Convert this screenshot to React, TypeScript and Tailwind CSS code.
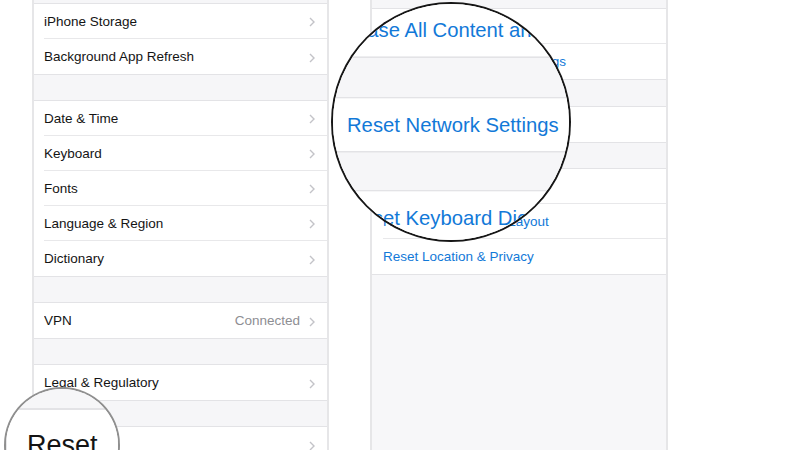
import React from "react";

type Row = { label: string; detail?: string; chevron?: boolean };

function Chevron() {
  return (
    <svg width="6" height="10" viewBox="0 0 6 10" className="shrink-0">
      <polyline points="1,1 5,5 1,9" fill="none" stroke="#c3c3c8" strokeWidth="1.4" />
    </svg>
  );
}

function Gap({ h }: { h: string }) {
  return <div className={`${h} shrink-0 border-y border-[#e3e3e6] bg-[#f6f6f8]`} />;
}

function Group({ rows, tone, pad }: { rows: Row[]; tone: "dark" | "blue"; pad: string }) {
  return (
    <div className="shrink-0 bg-white">
      {rows.map((row, i) => {
        const last = i === rows.length - 1;
        return (
          <div key={row.label} className={`flex h-[35px] ${pad}`}>
            <div
              className={
                "flex flex-1 items-center gap-[9px] pr-[12px] pt-[2px] " +
                (last ? "" : "border-b border-[#e8e8ea]")
              }
            >
              <span
                className={
                  "flex-1 truncate text-[13.5px] " +
                  (tone === "blue" ? "text-[#1279d8]" : "text-[#141414]")
                }
              >
                {row.label}
              </span>
              {row.detail ? <span className="text-[13.5px] text-[#8e8e93]">{row.detail}</span> : null}
              {row.chevron ? <Chevron /> : null}
            </div>
          </div>
        );
      })}
    </div>
  );
}

function Scene() {
  return (
    <div className="flex h-[450px] w-[800px] bg-white font-['Liberation_Sans',Arial,sans-serif]">
      {/* General settings */}
      <div className="ml-[32px] flex h-full w-[297px] flex-col overflow-hidden border-x-2 border-[#e6e6e8] bg-[#f6f6f8]">
        <div className="h-[4px] shrink-0 border-b border-[#e3e3e6] bg-[#f6f6f8]" />
        <Group
          tone="dark"
          pad="pl-[10px]"
          rows={[
            { label: "iPhone Storage", chevron: true },
            { label: "Background App Refresh", chevron: true },
          ]}
        />
        <Gap h="h-[27px]" />
        <Group
          tone="dark"
          pad="pl-[10px]"
          rows={[
            { label: "Date & Time", chevron: true },
            { label: "Keyboard", chevron: true },
            { label: "Fonts", chevron: true },
            { label: "Language & Region", chevron: true },
            { label: "Dictionary", chevron: true },
          ]}
        />
        <Gap h="h-[27px]" />
        <Group tone="dark" pad="pl-[10px]" rows={[{ label: "VPN", detail: "Connected", chevron: true }]} />
        <Gap h="h-[27px]" />
        <Group tone="dark" pad="pl-[10px]" rows={[{ label: "Legal & Regulatory", chevron: true }]} />
        <Gap h="h-[27px]" />
        <Group tone="dark" pad="pl-[10px]" rows={[{ label: "Reset", chevron: true }]} />
      </div>

      {/* Reset screen */}
      <div className="ml-[41px] flex h-full w-[298px] flex-col overflow-hidden border-x-2 border-[#e6e6e8] bg-[#f6f6f8]">
        <div className="h-[9px] shrink-0 border-b border-[#e3e3e6] bg-[#f6f6f8]" />
        <Group
          tone="blue"
          pad="pl-[11px]"
          rows={[{ label: "Reset All Settings" }, { label: "Erase All Content and Settings" }]}
        />
        <Gap h="h-[28px]" />
        <Group tone="blue" pad="pl-[11px]" rows={[{ label: "Reset Network Settings" }]} />
        <Gap h="h-[27px]" />
        <Group
          tone="blue"
          pad="pl-[11px]"
          rows={[
            { label: "Reset Keyboard Dictionary" },
            { label: "Reset Home Screen Layout" },
            { label: "Reset Location & Privacy" },
          ]}
        />
        <div className="flex-1 border-t border-[#e3e3e6] bg-[#f7f7f9]" />
      </div>
    </div>
  );
}

export default function App() {
  return (
    <div className="relative h-[450px] w-[800px] overflow-hidden bg-white">
      <Scene />

      {/* magnifier over "Reset" */}
      <div className="absolute left-[6px] top-[389px] h-[112px] w-[112px] overflow-hidden rounded-full bg-white ring-2 ring-[#8f8f8f]">
        <div className="absolute left-[-6px] top-[-389px] origin-[61px_444px] scale-[2]">
          <Scene />
        </div>
      </div>

      {/* magnifier over "Reset Network Settings" */}
      <div className="absolute left-[333px] top-[4px] h-[236px] w-[236px] overflow-hidden rounded-full bg-white ring-2 ring-[#161616]">
        <div className="absolute left-[-333px] top-[-4px] origin-[455px_124px] scale-[1.5]">
          <Scene />
        </div>
      </div>
    </div>
  );
}
